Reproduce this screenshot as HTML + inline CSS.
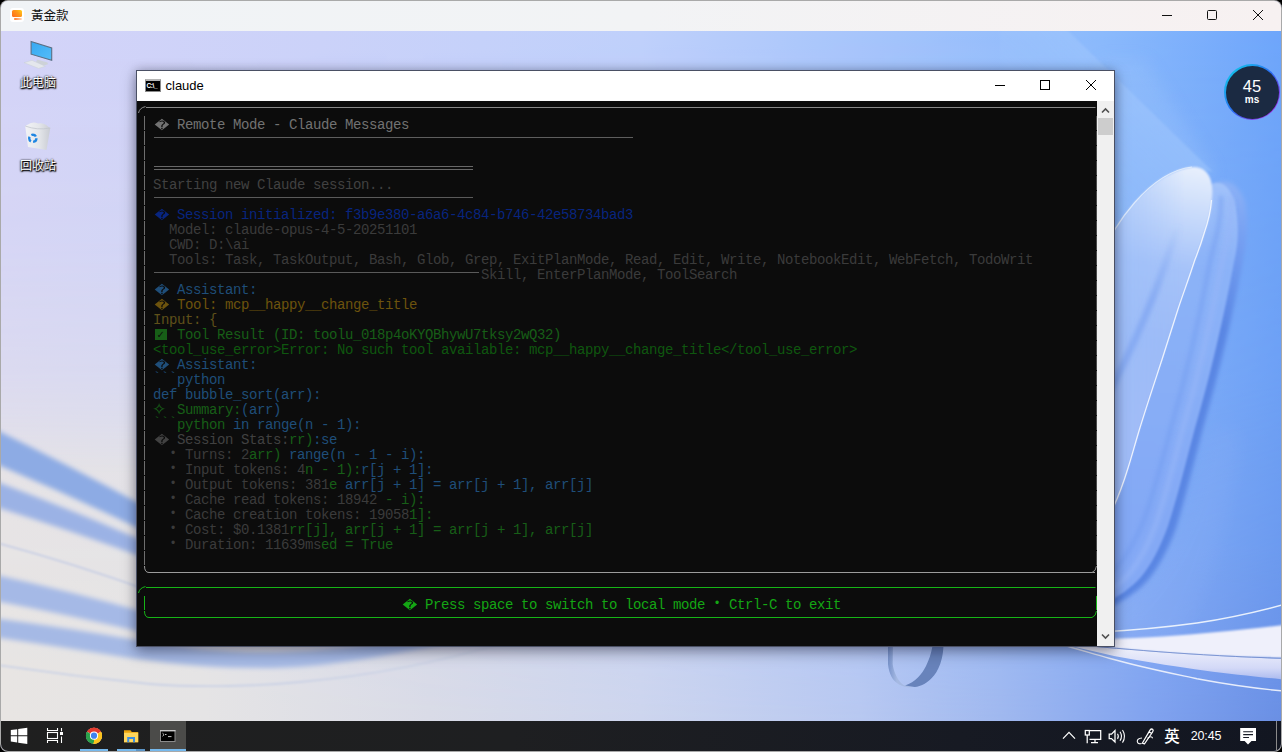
<!DOCTYPE html>
<html lang="zh-CN">
<head>
<meta charset="utf-8">
<title>黃金款</title>
<style>
*{box-sizing:border-box}
html,body{margin:0;padding:0;width:1282px;height:752px;overflow:hidden;background:#000}
body{font-family:"Liberation Sans","Noto Sans CJK SC",sans-serif;position:relative}
#win{position:absolute;left:0;top:0;width:1282px;height:752px;border-radius:8px;overflow:hidden;background:#a9a9a9}
#inner{position:absolute;left:1px;top:1px;width:1280px;height:750px;border-radius:7px;overflow:hidden;background:#d4d4f6}
#tbar{position:absolute;left:0;top:0;width:1280px;height:30px;background:linear-gradient(90deg,#f0f3f6 0%,#f2f3f5 50%,#f7f1f1 100%)}
#tbar .ttl{position:absolute;left:30px;top:6px;font-size:12.5px;line-height:18px;color:#111}
#appico{position:absolute;left:9px;top:7px;width:14px;height:14px;border-radius:3px;background:#fff}
#appico i{position:absolute;left:2px;top:2px;width:10px;height:7px;border-radius:1.5px;background:linear-gradient(45deg,#ff6a1f,#ff9a1a 60%,#ffd21a)}
#appico b{position:absolute;left:4px;top:10px;width:8px;height:2px;border-radius:1px;background:linear-gradient(90deg,#ff7a2a,#ffd9c0)}
.wc{position:absolute;top:0;height:30px;width:46px}
#desk{position:absolute;left:0;top:30px;width:1280px;height:690px;overflow:hidden}
#desk svg.wall{position:absolute;left:0;top:0}
#task{position:absolute;left:0;top:720px;width:1280px;height:30px;background:linear-gradient(90deg,#1f1f1f 0%,#1e1f21 40%,#171a23 75%,#121621 100%)}
.dicon{position:absolute;width:76px;text-align:center;color:#fff;font-size:12px;line-height:14px;text-shadow:0 1px 2px #000,0 0 2px #000,1px 1px 1px #000}
#ping{position:absolute;left:1223px;top:33px;width:56px;height:56px;border-radius:50%;background:linear-gradient(135deg,#12c4ea 10%,#2a6cf2 50%,#9a2be6 85%)}
#ping .pi{position:absolute;left:1.5px;top:1.5px;width:53px;height:53px;border-radius:50%;background:#1b2a42;color:#fff;text-align:center}
#ping .n{position:absolute;left:0;top:11.5px;width:53px;font:16.5px/18px "Liberation Sans",sans-serif}
#ping .u{position:absolute;left:0;top:28px;width:53px;font:bold 10px/12px "Liberation Sans",sans-serif}
/* terminal window */
#term{position:absolute;left:135px;top:39px;width:979px;height:577px;background:#fff;border:1px solid #4a5064;box-shadow:0 5px 14px rgba(0,0,25,.36),0 0 9px rgba(0,0,25,.2)}
#term .tt{position:absolute;left:0;top:0;width:977px;height:30px;background:#fff}
#term .tt .nm{position:absolute;left:28.5px;top:6.5px;font-size:13px;line-height:16px;color:#000}
#cmdico{position:absolute;left:8px;top:8px;width:16px;height:13px;background:#000;border:1px solid #8a8a8a;border-top:2px solid #b5b5b5}
#cmdico span{position:absolute;left:.5px;top:1px;font:bold 6.5px/8px "Liberation Sans",sans-serif;color:#fff;letter-spacing:-.4px;-webkit-font-smoothing:antialiased}
#con{position:absolute;left:0;top:30px;width:960px;height:545px;background:#0c0c0c;overflow:hidden;font-family:"Liberation Mono",monospace;font-size:14px;letter-spacing:-0.4014px;line-height:15px}
#sb{position:absolute;left:960px;top:30px;width:17px;height:545px;background:#f0f0f0}
#sb .th{position:absolute;left:1px;top:17px;width:15px;height:17px;background:#cdcdcd}
.ln{position:absolute;white-space:pre;height:15px;margin-top:2px}
.ln span{display:inline-block;height:15px;vertical-align:top}
.c2{width:16px;position:relative}
.c3{width:24px;position:relative}
.fd{position:absolute;left:1.5px;top:-2px;width:15px;text-align:center;font:normal 14.5px/18px "DejaVu Sans",sans-serif;letter-spacing:0;transform:scaleY(.8);transform-origin:50% 50%}
.chk{position:absolute;left:1.5px;top:1px;width:12.5px;height:11px;display:block}
.ck{position:absolute;left:1.5px;top:0;width:12.5px;text-align:center;font:bold 10px/13px "DejaVu Sans",sans-serif;color:#0c0c0c;letter-spacing:0}
.spk{position:absolute;left:-1px;top:-1px;font:normal 17px/15px "DejaVu Sans",sans-serif;letter-spacing:0}
.tk{position:absolute;left:0;top:-3px;letter-spacing:0;font:normal 13.333px/15px "Liberation Mono",monospace;height:6px;overflow:hidden}
.c1{width:8px;position:relative}
.bl{position:absolute;left:0;top:-3px;width:8px;text-align:center;font:normal 12px/16px "Liberation Sans",sans-serif;letter-spacing:0}
.hl{position:absolute;height:1px}
.vl{position:absolute;width:1px}
</style>
</head>
<body>
<div id="win"><div id="inner">
<div id="tbar">
  <div id="appico"><i></i><b></b></div>
  <div class="ttl">黃金款</div>
  <svg class="wc" style="left:1143px" width="46" height="30" viewBox="0 0 46 30"><path d="M18 14.5h10" stroke="#111" stroke-width="1" fill="none"/></svg>
  <svg class="wc" style="left:1188px" width="46" height="30" viewBox="0 0 46 30"><rect x="18.5" y="9.5" width="9" height="9" rx="1" stroke="#111" stroke-width="1" fill="none"/></svg>
  <svg class="wc" style="left:1233px" width="46" height="30" viewBox="0 0 46 30"><path d="M19 9l10 10M29 9L19 19" stroke="#111" stroke-width="1" fill="none"/></svg>
</div>
<div id="desk">
<svg class="wall" width="1280" height="690" viewBox="1 31 1280 690">
<defs>
<linearGradient id="gt" x1="0" y1="0" x2="1282" y2="0" gradientUnits="userSpaceOnUse">
<stop offset="0" stop-color="#d4d4f8"/><stop offset=".25" stop-color="#cbd2f9"/><stop offset=".5" stop-color="#bfd0fb"/><stop offset=".7" stop-color="#a3c3fb"/><stop offset=".86" stop-color="#8bbafc"/><stop offset="1" stop-color="#6ea6fb"/></linearGradient>
<linearGradient id="gb" x1="0" y1="0" x2="1282" y2="0" gradientUnits="userSpaceOnUse">
<stop offset="0" stop-color="#e8e5e3"/><stop offset=".16" stop-color="#e5e4e5"/><stop offset=".335" stop-color="#d9dbe7"/><stop offset=".5" stop-color="#cdd5ee"/><stop offset=".67" stop-color="#b8c8f1"/><stop offset=".78" stop-color="#a0b8ef"/><stop offset=".9" stop-color="#80a2ef"/><stop offset="1" stop-color="#6a8fe4"/></linearGradient>
<linearGradient id="gmL" x1="0" y1="31" x2="0" y2="721" gradientUnits="userSpaceOnUse"><stop offset="0" stop-color="#000000"/><stop offset="0.3" stop-color="#1f1f1f"/><stop offset="0.49" stop-color="#5c5c5c"/><stop offset="0.56" stop-color="#8f8f8f"/><stop offset="0.64" stop-color="#e0e0e0"/><stop offset="0.8" stop-color="#f5f5f5"/><stop offset="1" stop-color="#ffffff"/></linearGradient>
<linearGradient id="gmR" x1="0" y1="31" x2="0" y2="721" gradientUnits="userSpaceOnUse"><stop offset="0" stop-color="#000000"/><stop offset="0.5" stop-color="#404040"/><stop offset="0.75" stop-color="#808080"/><stop offset="0.9" stop-color="#cccccc"/><stop offset="1" stop-color="#ffffff"/></linearGradient>
<linearGradient id="hf" x1="0" y1="0" x2="1282" y2="0" gradientUnits="userSpaceOnUse"><stop offset=".15" stop-color="#000"/><stop offset=".75" stop-color="#fff"/></linearGradient>
<mask id="mh"><rect x="0" y="30" width="1282" height="692" fill="url(#hf)"/></mask>
<mask id="mb"><rect x="0" y="30" width="1282" height="692" fill="url(#gmL)"/><rect x="0" y="30" width="1282" height="692" fill="url(#gmR)" mask="url(#mh)"/></mask>
<filter id="b2" x="-20%" y="-20%" width="140%" height="140%"><feGaussianBlur stdDeviation="2"/></filter>
<filter id="b4" x="-20%" y="-20%" width="140%" height="140%"><feGaussianBlur stdDeviation="4"/></filter>
<filter id="b8" x="-30%" y="-30%" width="160%" height="160%"><feGaussianBlur stdDeviation="8"/></filter>
<filter id="b1" x="-20%" y="-20%" width="140%" height="140%"><feGaussianBlur stdDeviation="0.8"/></filter>
<linearGradient id="rf" x1="1195" y1="165" x2="1150" y2="420" gradientUnits="userSpaceOnUse">
<stop offset="0" stop-color="#e9f0fd"/><stop offset=".18" stop-color="#cadcfb"/><stop offset=".4" stop-color="#a6c3f9"/><stop offset=".7" stop-color="#9cbaf7"/><stop offset="1" stop-color="#a3baf6"/></linearGradient>
<linearGradient id="rb" x1="1235" y1="175" x2="1180" y2="520" gradientUnits="userSpaceOnUse">
<stop offset="0" stop-color="#a4c4fa"/><stop offset=".25" stop-color="#8cb3f8"/><stop offset="1" stop-color="#84a9f5"/></linearGradient>
<linearGradient id="sw2" x1="0" y1="650" x2="0" y2="680" gradientUnits="userSpaceOnUse"><stop offset="0" stop-color="#eceefb"/><stop offset=".6" stop-color="#d3d9f7"/><stop offset="1" stop-color="#a9b9ef"/></linearGradient>
<linearGradient id="fold" x1="0" y1="225" x2="0" y2="300" gradientUnits="userSpaceOnUse"><stop offset="0" stop-color="#7da3f0" stop-opacity="0"/><stop offset="1" stop-color="#7da3f0" stop-opacity=".7"/></linearGradient>
<linearGradient id="dk" x1="0" y1="175" x2="0" y2="330" gradientUnits="userSpaceOnUse"><stop offset="0" stop-color="#8fb4f7"/><stop offset=".4" stop-color="#76a0f2"/><stop offset="1" stop-color="#5a86e3"/></linearGradient>
<filter id="b3" x="-20%" y="-20%" width="140%" height="140%"><feGaussianBlur stdDeviation="2.6"/></filter>
<filter id="b05" x="-20%" y="-20%" width="140%" height="140%"><feGaussianBlur stdDeviation="0.6"/></filter>
<linearGradient id="rgl" x1="888" y1="0" x2="897" y2="0" gradientUnits="userSpaceOnUse"><stop offset="0" stop-color="#7893cb"/><stop offset="1" stop-color="#a5b9e2"/></linearGradient>
<linearGradient id="beam" x1="1140" y1="100" x2="1070" y2="172" gradientUnits="userSpaceOnUse"><stop offset="0" stop-color="#a6cafd" stop-opacity=".42"/><stop offset=".5" stop-color="#a6cafd" stop-opacity=".2"/><stop offset="1" stop-color="#a6cafd" stop-opacity="0"/></linearGradient>
<linearGradient id="fl" x1="1100" y1="0" x2="1185" y2="0" gradientUnits="userSpaceOnUse"><stop offset="0" stop-color="#9dbff9" stop-opacity=".75"/><stop offset="1" stop-color="#9dbff9" stop-opacity="0"/></linearGradient>
</defs>
<rect x="0" y="30" width="1282" height="692" fill="url(#gt)"/>
<rect x="0" y="30" width="1282" height="692" fill="url(#gb)" mask="url(#mb)"/>
<!-- right side: light beam -->
<path d="M1100 60L1145 60L1215 172L1110 260Z" fill="#9cc4fc" opacity=".3" filter="url(#b8)"/>
<path d="M1062 25L1213 172L1192 167C1150 172 1112 225 1095 262L1000 262L1000 25Z" fill="url(#beam)" filter="url(#b1)"/>
<!-- glow near lower ribbon -->
<path d="M1210 430C1195 500 1170 570 1110 620L1110 660L1180 640C1215 580 1235 500 1240 430Z" fill="#8fb0f6" opacity=".18" filter="url(#b8)"/>
<!-- back loop shadow edge -->
<path d="M1200 200C1212 176 1236 174 1245 202C1249 225 1246 245 1243 260C1232 320 1217 380 1203 428C1194 462 1186 495 1176 528C1168 550 1158 568 1148 580C1137 592 1126 600 1100 612L1100 300Z" fill="url(#dk)" filter="url(#b2)"/>
<!-- back loop body -->
<path d="M1200 200C1208 178 1226 176 1234 200C1240 225 1238 245 1234 262C1223 322 1209 380 1195 428C1186 462 1178 495 1168 526C1160 548 1151 565 1141 577C1131 588 1120 596 1100 606L1100 300Z" fill="url(#rb)" filter="url(#b1)"/>
<path d="M1231 196C1233 222 1226 244 1222 262C1211 322 1197 380 1183 428C1174 462 1166 495 1156 524C1148 546 1139 562 1129 574C1122 582 1112 590 1100 596" fill="none" stroke="#96b6f8" stroke-width="5" opacity=".7" filter="url(#b2)"/>
<path d="M1221 196C1222 222 1214 244 1210 262C1199 322 1185 380 1171 428C1162 462 1154 493 1144 520C1136 540 1128 554 1118 566C1112 572 1106 577 1100 581" fill="none" stroke="#6f9aef" stroke-width="4" opacity=".55" filter="url(#b2)"/>
<!-- front loop -->
<path d="M1100 262C1112 225 1150 172 1192 167C1208 166 1214 180 1212 198C1211 212 1208 222 1204.5 232C1201 244 1198 252 1194.8 260C1189 278 1183 294 1177.8 309.7C1172 328 1167 344 1162 359.5C1154 384 1146 408 1139.4 429.5C1135 444 1131 459 1128 468C1124 481 1120 493 1115 505L1100 520Z" fill="url(#rf)" filter="url(#b1)"/>
<path d="M1100 262C1112 225 1150 172 1192 167C1208 166 1214 180 1212 198C1211 212 1208 222 1204.5 232C1201 244 1198 252 1194.8 260C1189 278 1183 294 1177.8 309.7C1172 328 1167 344 1162 359.5C1154 384 1146 408 1139.4 429.5C1135 444 1131 459 1128 468C1124 481 1120 493 1115 505L1100 520Z" fill="url(#fl)" filter="url(#b1)"/>
<path d="M1178 225C1158 290 1135 345 1100 410" fill="none" stroke="url(#fold)" stroke-width="7" filter="url(#b2)"/>
<path d="M1100 262C1112 225 1150 172 1192 167" fill="none" stroke="#e9f1fd" stroke-width="1.2" opacity=".8"/>
<path d="M1211.5 200C1210.5 214 1208 222 1204.5 232C1201 244 1198 252 1194.8 260C1189 278 1183 294 1177.8 309.7C1172 328 1167 344 1162 359.5C1154 384 1146 408 1139.4 429.5C1135 444 1131 459 1128 468C1124 481 1120 493 1113 508" fill="none" stroke="#f1f6fe" stroke-width="1.3" opacity=".95"/>
<!-- bottom right swooshes -->
<path d="M1040 640C1140 640 1197 635 1284 625L1284 658C1230 657 1197 656 1114 648.3C1090 646 1070 644 1040 641Z" fill="#eff0fb" filter="url(#b1)"/>
<path d="M1060 643.6C1110 648.5 1197 656.5 1284 658.8L1284 679.5C1230 674 1197 671 1114 656Z" fill="url(#sw2)"/>
<path d="M1060 643C1110 648 1197 656 1284 658.3" fill="none" stroke="#6a86c8" stroke-width="1" opacity=".8"/>
<path d="M1100 632C1130 630.5 1160 628 1197 623C1230 618 1260 611 1284 604.5" fill="none" stroke="#e8f0fc" stroke-width="1.4"/>
<path d="M1060 644C1080 650 1095 654 1110 658.5C1140 667 1170 673 1197 678.8C1230 685 1260 689 1284 691" fill="none" stroke="#e6ecfb" stroke-width="1.4"/>
<!-- ring -->
<g filter="url(#b05)">
<path d="M888 640L888 664C888.5 669 889.5 673 891.5 676.7C894 681.5 899 686 908 687.2L914.7 687.1L905.1 685.5C901 684 898.5 680 896.3 675.9C894 671 893 667 892.7 664L893.1 640Z" fill="url(#rgl)"/>
<path d="M943.4 640L943.4 647C943 655 941.5 660 940.2 664C938 670 935 675 931.5 678.3C927 683 921 686.5 914.7 687.1L905.1 685.5C910 684 914.5 681 917.9 677.5C921.5 674 924 670 925.9 666.3C929 660 931 654 932.3 647L932.3 640Z" fill="#6783bb"/>
</g>
<!-- left streaks -->
<g filter="url(#b3)">
<path d="M-10 426.9Q70 466 150 509.2L150 533.8Q70 495 -10 461.5Z" fill="#8dabe4"/>
<path d="M-10 479Q70 509 150 543.7L150 559.8Q70 530 -10 505Z" fill="#9bb2e5"/>
<path d="M-10 573.5Q70 591 150 613.5L150 634Q70 615 -10 599.9Z" fill="#a5b9e6"/>
<path d="M-10 617.5Q70 628 136 640C180 647 220 652 262 652C320 652 380 645 450 630L450 642C380 658 320 668 262 668C220 668 180 665 136 659Q70 648 -10 636.5Z" fill="#a5b9e5"/>
</g>
<path d="M-10 541C50 557 100 573 150 591" stroke="#c6cde4" stroke-width="1.8" fill="none" filter="url(#b1)"/>
<path d="M-10 664C50 673 100 679 150 684C200 688 260 686 300 682C380 675 450 660 520 638" stroke="#cbd2e5" stroke-width="1.8" fill="none" filter="url(#b1)"/>
</svg>

<svg style="position:absolute;left:0;top:0" width="140" height="140" viewBox="1 31 140 140">
<defs><linearGradient id="mon" x1="0" y1="0" x2="1" y2="1"><stop offset="0" stop-color="#35a8f2"/><stop offset="1" stop-color="#55bdf8"/></linearGradient>
<linearGradient id="bin" x1="0" y1="0" x2="1" y2="0"><stop offset="0" stop-color="#f2f3f6"/><stop offset=".55" stop-color="#e4e6ea"/><stop offset="1" stop-color="#c9ccd3"/></linearGradient></defs>
<path d="M37 59.5L47.5 62.5L48 64.3L42.5 65.8L36 62.5Z" fill="#cdd2d8"/>
<path d="M31.1 41.4L51.7 48V60.3L31.1 54.2Z" fill="url(#mon)" stroke="#5b6f84" stroke-width="1.1"/>
<path d="M24 62.7L32 60.3L45.5 66.3L38.7 68.4Z" fill="#e4e7ec" stroke="#c9ced6" stroke-width=".5"/>
<path d="M28 124.5Q33 121 38 123.5Q44 122.5 48.5 127L50.3 128L46.5 150L28 147L25.2 126Z" fill="url(#bin)"/>
<path d="M25.2 126Q37 130.5 50.3 128" fill="none" stroke="#c3c7ce" stroke-width=".8"/>
<circle cx="32.8" cy="138.3" r="3.6" fill="none" stroke="#1f86e2" stroke-width="2.4" stroke-dasharray="5.2 2.3"/>
</svg>
<div class="dicon" style="left:-1px;top:45px">此电脑</div>
<div class="dicon" style="left:-1px;top:128px">回收站</div>
<div id="ping"><div class="pi"><div class="n">45</div><div class="u">ms</div></div></div>
<div id="term">
  <div class="tt">
    <div id="cmdico"><span>C:\_</span></div>
    <div class="nm">claude</div>
    <svg style="position:absolute;left:840px;top:0" width="137" height="30" viewBox="0 0 137 30"><path d="M18 14.5h10" stroke="#000" fill="none"/><rect x="63.5" y="9.5" width="9" height="9" stroke="#000" fill="none"/><path d="M109 9l10 10M119 9l-10 10" stroke="#000" fill="none"/></svg>
  </div>
  <div id="con">
<svg style="position:absolute;left:0;top:0" width="960" height="545" viewBox="0 0 960 545" fill="none" shape-rendering="auto">
<g stroke="#8c8c8c" stroke-width="1">
<path d="M9 6.5H958.5" stroke="#888"/>
<path d="M1.5 12Q2.5 6.8 8.5 5.6" stroke="#8c8c8c"/>
<path d="M7.5 15V465" stroke="#6e6e6e" stroke-dasharray="14 1"/>
<path d="M7.5 465Q7.5 471.5 12 471.5H958" stroke="#9c9c9c"/>
<path d="M959.5 15V465" stroke="#4a4a4a" stroke-dasharray="14 1"/>
<path d="M959.5 465Q959 470 955 471.5" stroke="#8a8a8a"/>
<path d="M17 36.5H496" stroke="#5e5e5e"/>
<path d="M17 65.5H336M17 68.5H336" stroke="#686868"/>
<path d="M17 96.5H336" stroke="#5a5a5a"/>
<path d="M17 171.5H342" stroke="#5a5a5a"/>
</g>
<g stroke="#16b416" stroke-width="1">
<path d="M9 486.5H958.5"/>
<path d="M1.5 492Q2.5 486.8 8.5 485.6"/>
<path d="M7.5 495V509"/>
<path d="M7.5 510Q7.5 516.5 12 516.5H955"/>
<path d="M959.5 495V509"/>
<path d="M959.5 510Q959 515 955 516.5"/>
</g>
</svg>
<div class="ln" style="left:16px;top:15px"><span class="c2"><b class="fd" style="color:#727272">�</b></span><span style="color:#727272"> Remote Mode - Claude Messages</span></div>
<div class="ln" style="left:16px;top:75px"><span style="color:#414141">Starting new Claude session...</span></div>
<div class="ln" style="left:16px;top:105px"><span class="c2"><b class="fd" style="color:#08257f">�</b></span><span style="color:#08257f"> Session initialized: f3b9e380-a6a6-4c84-b746-42e58734bad3</span></div>
<div class="ln" style="left:16px;top:120px"><span style="color:#3b3b3b">  Model: claude-opus-4-5-20251101</span></div>
<div class="ln" style="left:16px;top:135px"><span style="color:#3b3b3b">  CWD: D:\ai</span></div>
<div class="ln" style="left:16px;top:150px"><span style="color:#3b3b3b">  Tools: Task, TaskOutput, Bash, Glob, Grep, ExitPlanMode, Read, Edit, Write, NotebookEdit, WebFetch, TodoWrit</span></div>
<div class="ln" style="left:344px;top:165px"><span style="color:#3b3b3b">Skill, EnterPlanMode, ToolSearch</span></div>
<div class="ln" style="left:16px;top:180px"><span class="c2"><b class="fd" style="color:#1f4e79">�</b></span><span style="color:#1f4e79"> Assistant:</span></div>
<div class="ln" style="left:16px;top:195px"><span class="c2"><b class="fd" style="color:#6d530d">�</b></span><span style="color:#6d530d"> Tool: mcp__happy__change_title</span></div>
<div class="ln" style="left:16px;top:210px"><span style="color:#5f501a">Input: {</span></div>
<div class="ln" style="left:16px;top:225px"><span class="c2"><i class="chk" style="background:#175e17"></i><b class="ck">✓</b></span><span style="color:#175e17"> Tool Result (ID: toolu_018p4oKYQBhywU7tksy2wQ32)</span></div>
<div class="ln" style="left:16px;top:240px"><span style="color:#0f570f">&lt;tool_use_error&gt;Error: No such tool available: mcp__happy__change_title&lt;/tool_use_error&gt;</span></div>
<div class="ln" style="left:16px;top:255px"><span class="c2"><b class="fd" style="color:#1f4e79">�</b></span><span style="color:#1f4e79"> Assistant:</span></div>
<div class="ln" style="left:16px;top:270px"><span class="c3" style="color:#1f4e79"><b class="tk">```</b></span><span style="color:#1f4e79">python</span></div>
<div class="ln" style="left:16px;top:285px"><span style="color:#1f4e79">def bubble_sort(arr):</span></div>
<div class="ln" style="left:16px;top:300px"><span class="c2" style="color:#175e17"><b class="spk">✧</b></span><span style="color:#175e17"> Summary:</span><span style="color:#1f4e79">(arr)</span></div>
<div class="ln" style="left:16px;top:315px"><span class="c3" style="color:#175e17"><b class="tk">```</b></span><span style="color:#175e17">python</span><span style="color:#1f4e79"> in range(n - 1):</span></div>
<div class="ln" style="left:16px;top:330px"><span class="c2"><b class="fd" style="color:#414141">�</b></span><span style="color:#414141"> Session Stats:</span><span style="color:#175e17">rr)</span><span style="color:#1f4e79">:se</span></div>
<div class="ln" style="left:16px;top:345px"><span style="color:#3b3b3b">  </span><span class="c1" style="color:#3b3b3b"><b class="bl">•</b></span><span> </span><span style="color:#3b3b3b">Turns: 2</span><span style="color:#175e17">arr)</span><span style="color:#1f4e79"> range(n - 1 - i):</span></div>
<div class="ln" style="left:16px;top:360px"><span style="color:#3b3b3b">  </span><span class="c1" style="color:#3b3b3b"><b class="bl">•</b></span><span> </span><span style="color:#3b3b3b">Input tokens: 4</span><span style="color:#175e17">n - 1):</span><span style="color:#1f4e79">r[j + 1]:</span></div>
<div class="ln" style="left:16px;top:375px"><span style="color:#3b3b3b">  </span><span class="c1" style="color:#3b3b3b"><b class="bl">•</b></span><span> </span><span style="color:#3b3b3b">Output tokens: 381</span><span style="color:#175e17">e</span><span style="color:#1f4e79"> arr[j + 1] = arr[j + 1], arr[j]</span></div>
<div class="ln" style="left:16px;top:390px"><span style="color:#3b3b3b">  </span><span class="c1" style="color:#3b3b3b"><b class="bl">•</b></span><span> </span><span style="color:#3b3b3b">Cache read tokens: 18942</span><span style="color:#175e17"> - i):</span></div>
<div class="ln" style="left:16px;top:405px"><span style="color:#3b3b3b">  </span><span class="c1" style="color:#3b3b3b"><b class="bl">•</b></span><span> </span><span style="color:#3b3b3b">Cache creation tokens: 19058</span><span style="color:#175e17">1]:</span></div>
<div class="ln" style="left:16px;top:420px"><span style="color:#3b3b3b">  </span><span class="c1" style="color:#3b3b3b"><b class="bl">•</b></span><span> </span><span style="color:#3b3b3b">Cost: $0.1381</span><span style="color:#175e17">rr[j], arr[j + 1] = arr[j + 1], arr[j]</span></div>
<div class="ln" style="left:16px;top:435px"><span style="color:#3b3b3b">  </span><span class="c1" style="color:#3b3b3b"><b class="bl">•</b></span><span> </span><span style="color:#3b3b3b">Duration: 11639ms</span><span style="color:#175e17">ed = True</span></div>
<div class="ln" style="left:264px;top:495px"><span class="c2"><b class="fd" style="color:#14a614">�</b></span><span style="color:#14a614"> Press space to switch to local mode </span><span class="c1" style="color:#14a614"><b class="bl">•</b></span><span style="color:#14a614"> Ctrl-C to exit</span></div>
  </div>
  <div id="sb"><div class="th"></div>
    <svg style="position:absolute;left:0;top:0" width="17" height="545" viewBox="0 0 17 545"><path d="M5 11.5l3.5-3.5l3.5 3.5" stroke="#505050" stroke-width="1.6" fill="none"/><path d="M5 533.5l3.5 3.5l3.5-3.5" stroke="#505050" stroke-width="1.6" fill="none"/></svg>
  </div>
</div>
</div>
<div id="task">
<div style="position:absolute;left:149px;top:0;width:36px;height:30px;background:#4b4b49"></div>
<div style="position:absolute;left:79px;top:28px;width:28px;height:2px;background:#76b9ed"></div>
<div style="position:absolute;left:116px;top:28px;width:28px;height:2px;background:linear-gradient(90deg,#76b9ed 0,#76b9ed 68%,#5b94c6 68%)"></div>
<div style="position:absolute;left:149px;top:28px;width:36px;height:2px;background:#76b9ed"></div>
<svg style="position:absolute;left:0;top:0" width="1280" height="30" viewBox="1 721 1280 30">
<!-- windows logo -->
<path d="M10.8 730.1L17.2 729.2V735.3H10.8ZM18.2 729.05L27.3 727.8V735.3H18.2ZM10.8 736.3H17.2V742.5L10.8 741.6ZM18.2 736.3H27.3V744L18.2 742.7Z" fill="#fff"/>
<!-- task view -->
<g fill="none" stroke="#fff" stroke-width="1.1"><rect x="47.5" y="732.5" width="10" height="6"/><path d="M47.5 728V730.5H57.5V728M47.5 743V740.5H57.5V743M61.5 728V731.3M61.5 736.5V743"/></g>
<rect x="60" y="732" width="3" height="3" fill="#fff"/>
<!-- chrome -->
<g transform="translate(94 735.7)">
<circle r="8" fill="#fff"/>
<path d="M0 0L-6.93 -4A8 8 0 0 1 6.93 -4Z" fill="#e33b2e"/>
<path d="M0 0L6.93 -4A8 8 0 0 1 0 8Z" fill="#fcc31e" transform="rotate(0)"/>
<path d="M0 0L0 8A8 8 0 0 1 -6.93 -4Z" fill="#2ba24c"/>
<path d="M-6.93 -4A8 8 0 0 1 6.93 -4L0 -4Z" fill="#e33b2e"/>
<path d="M6.93 -4A8 8 0 0 1 -1.2 7.9L3.46 2Z" fill="#fcc31e"/>
<path d="M-1.2 7.9A8 8 0 0 1 -6.93 -4L-3.46 2Z" fill="#2ba24c"/>
<circle r="4.1" fill="#fff"/><circle r="3.1" fill="#3f82ee"/>
</g>
<!-- explorer -->
<path d="M124 730.2H130.5L131.8 732H138.2V742.2H124Z" fill="#eba40e"/>
<path d="M124 732.8H138.2V742.2H124Z" fill="#ffd65c"/>
<path d="M127.2 742.2V737H135V742.2H133V739H129.2V742.2Z" fill="#3b8fe3"/>
<!-- cmd -->
<rect x="160.5" y="730.5" width="14.5" height="11" fill="#000" stroke="#8b8b8b" stroke-width="1"/>
<rect x="160" y="730" width="15.5" height="1.4" fill="#c9c9c9"/>
<path d="M162.5 733.2l1.6 1.5l-1.6 1.5M165 734.5h1.5M168 736.6h3.5" stroke="#ddd" stroke-width=".9" fill="none"/>
<!-- tray -->
<g fill="none" stroke="#fff" stroke-width="1.25">
<path d="M1063 738.6L1069 732.4L1075 738.6"/>
<path d="M1089.5 730.7H1100.7V739.4H1089.5M1095 739.4V742.6M1091 742.6H1098M1087.2 735V743.2"/>
<rect x="1085.3" y="730.5" width="4" height="4.5"/>
<path d="M1109.2 734.2H1111.5L1115 730.6V742L1111.5 738.6H1109.2Z"/>
<path d="M1117.5 733.7Q1119.2 736.3 1117.5 738.9M1120 731.8Q1123 736.3 1120 740.8M1122.5 730Q1126.5 736.3 1122.5 742.6" stroke-width="1.1"/>
<path d="M1142.3 743.2L1150 730.2Q1151.3 728.4 1152.6 729.3Q1153.8 730.3 1152.6 732L1144.5 743.8ZM1142.3 743.2L1144.5 743.8M1149 731.8L1151.6 733.5"/>
<path d="M1142 738Q1137 738.5 1137.3 741.6Q1138 744.5 1141.5 743.4M1147.6 738.2Q1151.5 735.2 1152.6 738.3" stroke-width="1.1"/>
</g>
<!-- notification -->
<path d="M1240.2 728H1256V741H1251.5L1248 744.5L1244.6 741H1240.2Z" fill="#fff"/>
<path d="M1243.2 731.8H1253M1243.2 734.6H1253M1243.2 737.5H1249" stroke="#161a24" stroke-width="1.1"/>
<rect x="1276" y="721" width="1" height="30" fill="#8a8a8a"/>
</svg>
<div style="position:absolute;left:1162px;top:5px;width:18px;text-align:center;font:500 15.5px/22px 'Liberation Sans','Noto Sans CJK SC',sans-serif;color:#fff">英</div>
<div style="position:absolute;left:1184px;top:5px;width:42px;text-align:center;font:12.5px/21px 'Liberation Sans',sans-serif;color:#fff;letter-spacing:-.2px">20:45</div>
</div>
</div></div>
</body>
</html>
